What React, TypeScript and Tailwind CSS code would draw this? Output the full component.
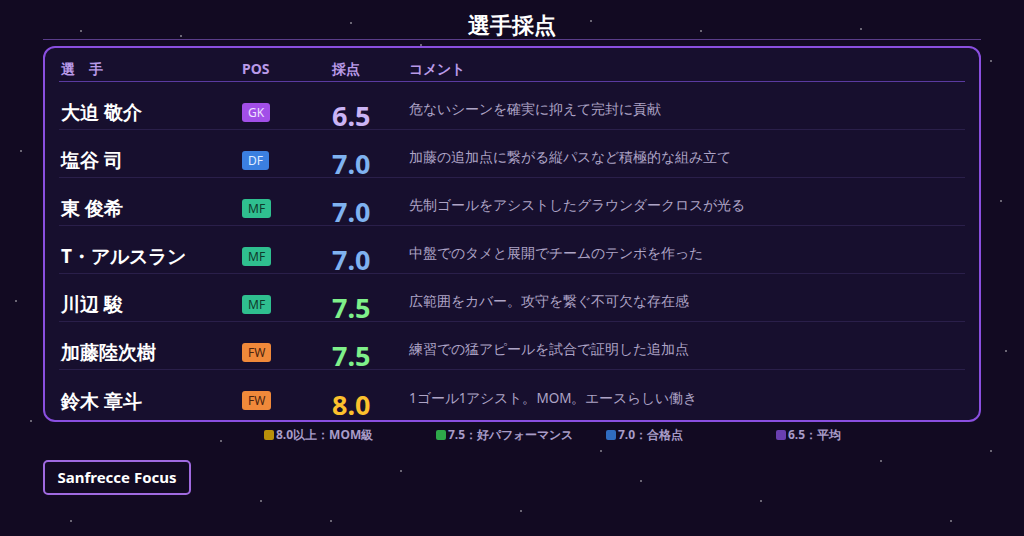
const rows = [
  { name: "大迫 敬介", pos: "GK", score: "6.5", comment: "危ないシーンを確実に抑えて完封に貢献" },
  { name: "塩谷 司", pos: "DF", score: "7.0", comment: "加藤の追加点に繋がる縦パスなど積極的な組み立て" },
  { name: "東 俊希", pos: "MF", score: "7.0", comment: "先制ゴールをアシストしたグラウンダークロスが光る" },
  { name: "T・アルスラン", pos: "MF", score: "7.0", comment: "中盤でのタメと展開でチームのテンポを作った" },
  { name: "川辺 駿", pos: "MF", score: "7.5", comment: "広範囲をカバー。攻守を繋ぐ不可欠な存在感" },
  { name: "加藤陸次樹", pos: "FW", score: "7.5", comment: "練習での猛アピールを試合で証明した追加点" },
  { name: "鈴木 章斗", pos: "FW", score: "8.0", comment: "1ゴール1アシスト。MOM。エースらしい働き" },
];

const badge: Record<string, string> = {
  GK: "bg-[#a24fe8] text-[#ede0ff]",
  DF: "bg-[#3b7fe0] text-[#e0ecff]",
  MF: "bg-[#2fbf8f] text-[#0f3a2c]",
  FW: "bg-[#f0893a] text-[#4a2410]",
};

const scoreColor: Record<string, string> = {
  "6.5": "text-[#cbb4f5]",
  "7.0": "text-[#7fb2f0]",
  "7.5": "text-[#7ff08a]",
  "8.0": "text-[#fbc02d]",
};

const stars = [
  [80, 30], [120, 60], [160, 75], [180, 35], [350, 22], [420, 44], [590, 20], [700, 30], [860, 28], [990, 60],
  [20, 150], [1000, 200], [15, 300], [1005, 350], [30, 420], [120, 460], [260, 500], [400, 470], [520, 510],
  [640, 480], [760, 500], [880, 460], [950, 520], [330, 520], [70, 520], [990, 450], [600, 450], [220, 440],
];

export default function App() {
  return (
    <div className="relative h-[536px] w-[1024px] overflow-hidden bg-[#120a22] font-['Noto_Sans_CJK_JP',sans-serif]">
      {stars.map(([x, y], i) => (
        <div key={i} className="absolute h-[2px] w-[2px] rounded-full bg-white/50" style={{ left: x, top: y }} />
      ))}
      <div className="relative px-[43px] pt-[9px]">
        <h1 className="text-center text-[22px] font-bold leading-[30px] text-white">選手採点</h1>
        <div className="h-px bg-[#5a3d8a]" />
        <div className="mt-[6px] rounded-[12px] border-2 border-[#8a4fe0] bg-[#170f2e] px-[14px] pb-[2px] pt-[8px]">
          <div className="flex h-[26px] items-center border-b border-[#5a3aa0] text-[14px] font-bold text-[#b99ae8]">
            <div className="w-[183px] pl-[2px] tracking-[1em]">選手</div>
            <div className="w-[90px]">POS</div>
            <div className="w-[77px]">採点</div>
            <div>コメント</div>
          </div>
          {rows.map((r, i) => (
            <div
              key={r.name}
              className={`flex h-[48px] items-center ${i < rows.length - 1 ? "border-b border-[#2a1f4a]" : ""}`}
            >
              <div className="w-[183px] pl-[2px] pt-[14px] text-[19px] font-bold text-white">{r.name}</div>
              <div className="w-[90px] self-start pt-[17px]">
                <span className={`inline-block rounded-[3px] px-[6px] text-[12px] leading-[19px] ${badge[r.pos]}`}>{r.pos}</span>
              </div>
              <div className={`w-[77px] pt-[20px] text-[27px] font-bold leading-none ${scoreColor[r.score]}`}>{r.score}</div>
              <div className="pt-[8px] text-[13.5px] text-[#aea4c6]">{r.comment}</div>
            </div>
          ))}
        </div>
        <div className="mt-[4px] flex text-[12px] font-bold text-[#a89cc8]">
          <div className="ml-[221px] flex w-[172px] items-center gap-[2px]"><span className="h-[10px] w-[10px] rounded-[2px] bg-[#b8900a]" />8.0以上：MOM級</div>
          <div className="flex w-[170px] items-center gap-[2px]"><span className="h-[10px] w-[10px] rounded-[2px] bg-[#2ea84a]" />7.5：好パフォーマンス</div>
          <div className="flex w-[170px] items-center gap-[2px]"><span className="h-[10px] w-[10px] rounded-[2px] bg-[#2f6cc0]" />7.0：合格点</div>
          <div className="flex items-center gap-[2px]"><span className="h-[10px] w-[10px] rounded-[2px] bg-[#6a3fb0]" />6.5：平均</div>
        </div>
        <div className="mt-[16px] inline-block w-[148px] rounded-[5px] border-2 border-[#a06ae0] py-[4px] text-center text-[15px] font-bold text-white">
          Sanfrecce Focus
        </div>
      </div>
    </div>
  );
}
